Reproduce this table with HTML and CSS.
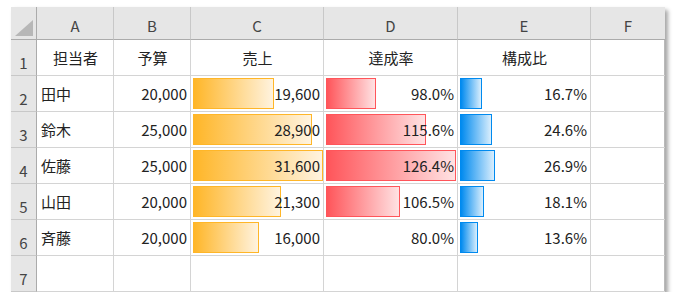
FILE: index.html
```html
<!DOCTYPE html>
<html lang="ja">
<head>
<meta charset="utf-8">
<title>Sheet</title>
<link rel="stylesheet" href="styles.css">
</head>
<body>
<div class="sheet">
  <div class="corner"><span class="tri"></span></div>
  <div class="colhead">A</div>
  <div class="colhead">B</div>
  <div class="colhead">C</div>
  <div class="colhead">D</div>
  <div class="colhead">E</div>
  <div class="colhead">F</div>

  <div class="rowhead">1</div>
  <div class="cell center">担当者</div>
  <div class="cell center">予算</div>
  <div class="cell center">売上</div>
  <div class="cell center">達成率</div>
  <div class="cell center">構成比</div>
  <div class="cell"></div>

  <div class="rowhead">2</div>
  <div class="cell">田中</div>
  <div class="cell num">20,000</div>
  <div class="cell num"><span class="bar orange" style="width:81px"></span><span class="val">19,600</span></div>
  <div class="cell num"><span class="bar red" style="width:50px"></span><span class="val">98.0%</span></div>
  <div class="cell num"><span class="bar blue" style="width:22px"></span><span class="val">16.7%</span></div>
  <div class="cell"></div>

  <div class="rowhead">3</div>
  <div class="cell">鈴木</div>
  <div class="cell num">25,000</div>
  <div class="cell num"><span class="bar orange" style="width:119px"></span><span class="val">28,900</span></div>
  <div class="cell num"><span class="bar red" style="width:100px"></span><span class="val">115.6%</span></div>
  <div class="cell num"><span class="bar blue" style="width:32px"></span><span class="val">24.6%</span></div>
  <div class="cell"></div>

  <div class="rowhead">4</div>
  <div class="cell">佐藤</div>
  <div class="cell num">25,000</div>
  <div class="cell num"><span class="bar orange" style="width:130px"></span><span class="val">31,600</span></div>
  <div class="cell num"><span class="bar red" style="width:130px"></span><span class="val">126.4%</span></div>
  <div class="cell num"><span class="bar blue" style="width:35px"></span><span class="val">26.9%</span></div>
  <div class="cell"></div>

  <div class="rowhead">5</div>
  <div class="cell">山田</div>
  <div class="cell num">20,000</div>
  <div class="cell num"><span class="bar orange" style="width:88px"></span><span class="val">21,300</span></div>
  <div class="cell num"><span class="bar red" style="width:74px"></span><span class="val">106.5%</span></div>
  <div class="cell num"><span class="bar blue" style="width:24px"></span><span class="val">18.1%</span></div>
  <div class="cell"></div>

  <div class="rowhead">6</div>
  <div class="cell">斉藤</div>
  <div class="cell num">20,000</div>
  <div class="cell num"><span class="bar orange" style="width:66px"></span><span class="val">16,000</span></div>
  <div class="cell num"><span class="val">80.0%</span></div>
  <div class="cell num"><span class="bar blue" style="width:18px"></span><span class="val">13.6%</span></div>
  <div class="cell"></div>

  <div class="rowhead">7</div>
  <div class="cell"></div>
  <div class="cell"></div>
  <div class="cell"></div>
  <div class="cell"></div>
  <div class="cell"></div>
  <div class="cell"></div>
</div>
</body>
</html>
```
FILE: styles.css
```css
* { box-sizing: border-box; }
html, body { margin: 0; padding: 0; background: #ffffff; }
body {
  padding: 7px 0 0 11px;
  font-family: "Noto Sans CJK JP", "Noto Sans", sans-serif;
  font-size: 15px;
  color: #222;
}
.sheet {
  display: grid;
  grid-template-columns: 26px 77px 77px 133px 134px 133px 74px;
  grid-template-rows: 33px repeat(7, 36px);
  width: 654px;
  background: #fff;
  border-right: 1px solid #b9b9b9;
  box-shadow: 3px 3px 4px rgba(0, 0, 0, 0.35);
}
.corner {
  background: #e6e6e6;
  border-right: 1px solid #ababab;
  border-bottom: 1px solid #ababab;
  position: relative;
}
.tri {
  position: absolute;
  right: 3px;
  bottom: 3px;
  width: 0;
  height: 0;
  border-left: 18px solid transparent;
  border-bottom: 16px solid #b7b7b7;
}
.colhead {
  background: #e6e6e6;
  border-right: 1px solid #c8c8c8;
  border-bottom: 1px solid #ababab;
  color: #444;
  display: flex;
  align-items: flex-end;
  justify-content: center;
  padding-bottom: 3px;
  font-size: 15px;
}
.colhead:nth-child(7) { border-right: none; }
.rowhead {
  background: #e6e6e6;
  border-right: 1px solid #ababab;
  border-bottom: 1px solid #c8c8c8;
  color: #444;
  display: flex;
  align-items: flex-end;
  justify-content: center;
  padding-bottom: 2px;
}
.cell {
  border-right: 1px solid #d4d4d4;
  border-bottom: 1px solid #d4d4d4;
  display: flex;
  align-items: center;
  padding: 0 3px 0 4px;
  position: relative;
  white-space: nowrap;
  color: #222;
}
.sheet > .cell:nth-child(7n) { border-right: none; }
.center { justify-content: center; }
.num { justify-content: flex-end; }
.val { position: relative; }
.bar {
  position: absolute;
  left: 2px;
  top: 2px;
  height: 31px;
  border: 1px solid;
}
.orange {
  border-color: #ffb628;
  background: linear-gradient(to right, #ffb628, #fff3df);
}
.red {
  border-color: #ff555a;
  background: linear-gradient(to right, #ff555a, #ffe2e3);
}
.blue {
  border-color: #008aef;
  background: linear-gradient(to right, #008aef, #d9eefd);
}
```
